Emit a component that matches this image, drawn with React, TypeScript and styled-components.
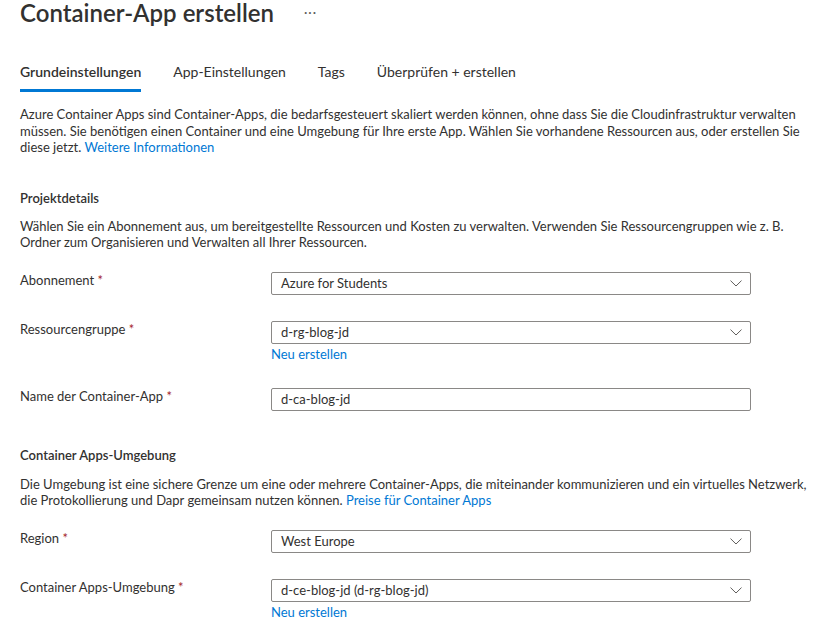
import React from "react";
import styled, { createGlobalStyle } from "styled-components";

const GlobalStyle = createGlobalStyle`
  html, body {
    margin: 0;
    padding: 0;
    background: #ffffff;
  }
  body {
    font-family: Lato, "Open Sans", "Liberation Sans", sans-serif;
    color: #323130;
    font-size: 13px;
  }
`;

const tabs = ["Grundeinstellungen", "App-Einstellungen", "Tags", "Überprüfen + erstellen"];

function Chevron() {
  return (
    <svg width="12" height="7" viewBox="0 0 12 7" fill="none">
      <path d="M0.5 0.6 L6 6 L11.5 0.6" stroke="#605e5c" strokeWidth="1" />
    </svg>
  );
}

type FieldProps = {
  label: string;
  value: string;
  select?: boolean;
  createLink?: boolean;
};

function Field({ label, value, select = true, createLink = false }: FieldProps) {
  return (
    <FieldRow>
      <Label>
        {label} <Required>*</Required>
      </Label>
      <Control>
        <Box>
          <span>{value}</span>
          {select && <Chevron />}
        </Box>
        {createLink && <Link>Neu erstellen</Link>}
      </Control>
    </FieldRow>
  );
}

export default function App() {
  return (
    <>
      <GlobalStyle />
      <Page>
        <Header>
          <Title>Container-App erstellen</Title>
          <More>···</More>
        </Header>

        <TabBar>
          {tabs.map((t, i) => (
            <Tab key={t} $active={i === 0}>
              {t}
            </Tab>
          ))}
        </TabBar>

        <Paragraph $top={14}>
          Azure Container Apps sind Container-Apps, die bedarfsgesteuert skaliert werden können, ohne dass Sie
          die Cloudinfrastruktur verwalten müssen. Sie benötigen einen Container und eine Umgebung für Ihre
          erste App. Wählen Sie vorhandene Ressourcen aus, oder erstellen Sie diese jetzt.{" "}
          <Link>Weitere Informationen</Link>
        </Paragraph>

        <SectionTitle $top={33}>Projektdetails</SectionTitle>
        <Paragraph>
          Wählen Sie ein Abonnement aus, um bereitgestellte Ressourcen und Kosten zu verwalten. Verwenden Sie
          Ressourcengruppen wie z. B. Ordner zum Organisieren und Verwalten all Ihrer Ressourcen.
        </Paragraph>

        <Fields>
          <Field label="Abonnement" value="Azure for Students" />
          <Field label="Ressourcengruppe" value="d-rg-blog-jd" createLink />
          <Field label="Name der Container-App" value="d-ca-blog-jd" select={false} />
        </Fields>

        <SectionTitle $top={35}>Container Apps-Umgebung</SectionTitle>
        <Paragraph $top={12}>
          Die Umgebung ist eine sichere Grenze um eine oder mehrere Container-Apps, die miteinander
          kommunizieren und ein virtuelles Netzwerk, die Protokollierung und Dapr gemeinsam nutzen können.{" "}
          <Link>Preise für Container Apps</Link>
        </Paragraph>

        <Fields>
          <Field label="Region" value="West Europe" />
          <Field label="Container Apps-Umgebung" value="d-ce-blog-jd (d-rg-blog-jd)" createLink />
        </Fields>
      </Page>
    </>
  );
}

const Page = styled.div`
  padding: 0 20px 0 20px;
  width: 839px;
  box-sizing: border-box;
  overflow: hidden;
  height: 622px;
`;

const Header = styled.div`
  display: flex;
  align-items: center;
  gap: 30px;
  height: 30px;
  margin-top: -2px;
`;

const Title = styled.h1`
  margin: 0;
  font-size: 24px;
  font-weight: 600;
  color: #323130;
  line-height: 30px;
`;

const More = styled.span`
  font-size: 13px;
  color: #605e5c;
  letter-spacing: 1px;
  margin-top: -2px;
`;

const TabBar = styled.div`
  display: flex;
  gap: 32px;
  margin-top: 30px;
`;

const Tab = styled.div<{ $active?: boolean }>`
  font-size: 14px;
  color: #323130;
  padding: 6px 0 9px;
  line-height: 16px;
  border-bottom: 3px solid ${(p) => (p.$active ? "#0078d4" : "transparent")};
  font-weight: ${(p) => (p.$active ? 600 : 400)};
`;

const Paragraph = styled.p<{ $top?: number }>`
  margin: ${(p) => p.$top ?? 11}px 0 0;
  font-size: 13px;
  line-height: 16.5px;
  color: #323130;
`;

const SectionTitle = styled.h2<{ $top?: number }>`
  margin: ${(p) => p.$top ?? 34}px 0 0;
  font-size: 13px;
  font-weight: 600;
  line-height: 18px;
  color: #323130;
`;

const Link = styled.span`
  color: #0078d4;
  cursor: pointer;
  line-height: 15px;
`;

const Fields = styled.div`
  display: flex;
  flex-direction: column;
  gap: 26px;
  margin-top: 21px;
`;

const FieldRow = styled.div`
  display: grid;
  grid-template-columns: 251px 480px;
  align-items: start;
`;

const Label = styled.div`
  font-size: 13px;
  line-height: 16px;
  color: #323130;
`;

const Required = styled.span`
  color: #a4262c;
`;

const Control = styled.div`
  display: flex;
  flex-direction: column;
  gap: 3px;
`;

const Box = styled.div`
  box-sizing: border-box;
  height: 23px;
  border: 1px solid #8a8886;
  border-radius: 2px;
  display: flex;
  align-items: center;
  justify-content: space-between;
  padding: 0 8px 0 9px;
  font-size: 13px;
  color: #323130;
`;
